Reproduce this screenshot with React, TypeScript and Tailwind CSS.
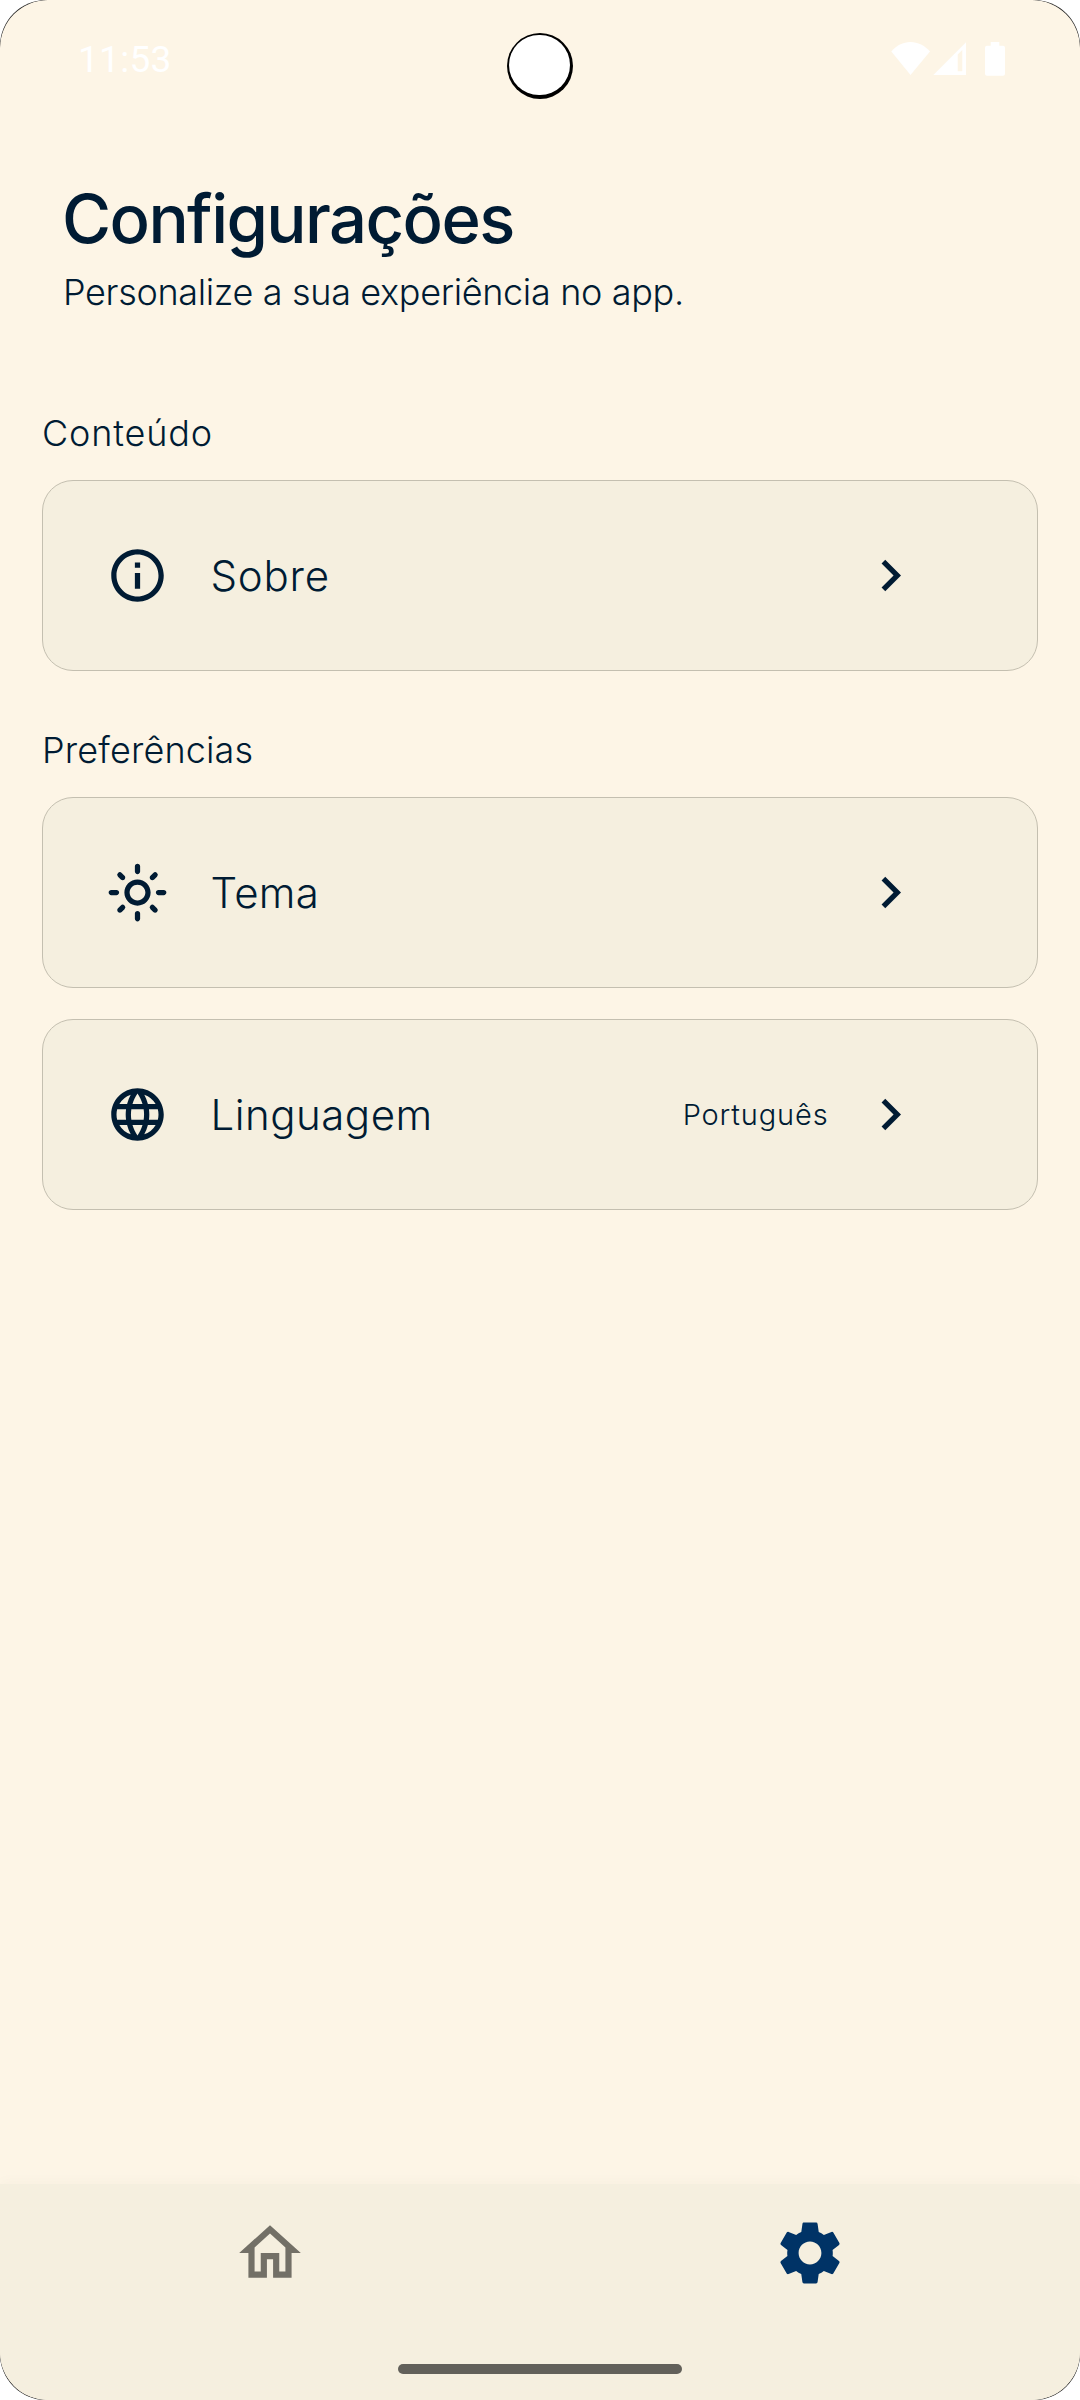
import type { ReactNode } from "react";
import {
  MdChevronRight,
  MdInfoOutline,
  MdLanguage,
  MdOutlineHome,
  MdOutlineLightMode,
  MdSettings,
} from "react-icons/md";

function StatusBar() {
  return (
    <header className="relative flex h-[118px] shrink-0 items-center justify-between pr-[75px] pl-[78px] text-white">
      <span className="font-['Roboto',sans-serif] text-[37px] leading-none font-normal tracking-[0.3px]">
        11:53
      </span>
      {/* Camera cut-out */}
      <div className="absolute top-[33px] left-[507px] flex size-[66px] rounded-full bg-black pt-[1.5px] pl-[2px]">
        <div className="size-[60.5px] rounded-full bg-white" />
      </div>
      <svg className="h-[34px] w-[114px]" viewBox="0 0 114 34" fill="currentColor">
        <path d="M19.5 33 0.3 9.5C5.5 3.5 12 0 19.5 0S33.5 3.5 39 9.5Z" />
        <path
          fillRule="evenodd"
          d="M42.3 33 75 0.3V33ZM66.7 12.5V29.3H71.3V8Z"
        />
        <path d="M99.7 0h8.6v3.7H112a2 2 0 0 1 2 2v26a2 2 0 0 1-2 2H96a2 2 0 0 1-2-2v-26a2 2 0 0 1 2-2h3.7Z" />
      </svg>
    </header>
  );
}

type RowProps = {
  icon: ReactNode;
  label: string;
  labelClass: string;
  value?: string;
};

function SettingsRow({ icon, label, labelClass, value }: RowProps) {
  return (
    <button
      type="button"
      className="flex h-[191px] w-full items-center rounded-[31px] border border-[#c4bfb0] bg-[#f5efdf] pr-[115.5px] pl-[62.5px] text-left"
    >
      <span className="size-[63px] shrink-0">{icon}</span>
      <span className={`ml-[42px] flex-1 text-[42px] leading-[52px] ${labelClass}`}>{label}</span>
      {value && (
        <span className="mr-[30px] text-[29px] leading-9 tracking-[0.85px]">{value}</span>
      )}
      <MdChevronRight className="size-[63px] shrink-0" />
    </button>
  );
}

export default function App() {
  return (
    <div className="h-[2400px] w-[1080px] overflow-hidden bg-white">
      <div className="size-full overflow-hidden rounded-[46px] bg-[#222222]">
        <div className="flex size-full flex-col overflow-hidden rounded-[48px] bg-[#fdf5e6] font-['Inter',sans-serif] font-light text-[#001b33]">
          <StatusBar />

          <main className="flex flex-1 flex-col px-[42px] pt-[61px]">
            <div className="pl-[20px]">
              <h1 className="text-[67px] leading-[80px] font-medium tracking-[-1.6px]">
                Configurações
              </h1>
              <p className="mt-[11px] ml-px text-[36px] leading-[44px] tracking-[-0.34px]">
                Personalize a sua experiência no app.
              </p>
            </div>

            <section className="mt-[97px]">
              <h2 className="mb-[25px] text-[36px] leading-[44px] tracking-[0.85px]">Conteúdo</h2>
              <SettingsRow
                icon={<MdInfoOutline className="size-full" />}
                label="Sobre"
                labelClass="tracking-[0.8px]"
              />
            </section>

            <section className="mt-[57px]">
              <h2 className="mb-[25px] text-[36px] leading-[44px] tracking-[0.15px]">
                Preferências
              </h2>
              <div className="flex flex-col gap-[31px]">
                <SettingsRow
                  icon={<MdOutlineLightMode className="size-full" />}
                  label="Tema"
                  labelClass="tracking-[0.3px]"
                />
                <SettingsRow
                  icon={<MdLanguage className="size-full" />}
                  label="Linguagem"
                  labelClass="tracking-[0.5px]"
                  value="Português"
                />
              </div>
            </section>
          </main>

          <nav className="h-[216px] shrink-0 bg-[#f5efdf] shadow-[0_-3px_12px_rgba(0,0,0,0.025)]">
            <div className="flex h-[137px]">
              <button type="button" className="flex flex-1 items-center justify-center text-[#737067]">
                <MdOutlineHome className="size-[74px]" />
              </button>
              <button type="button" className="flex flex-1 items-center justify-center text-[#003366]">
                <MdSettings className="size-[76px]" />
              </button>
            </div>
            <div className="mx-auto mt-[43px] h-[10px] w-[284px] rounded-full bg-[#62605a]" />
          </nav>
        </div>
      </div>
    </div>
  );
}
